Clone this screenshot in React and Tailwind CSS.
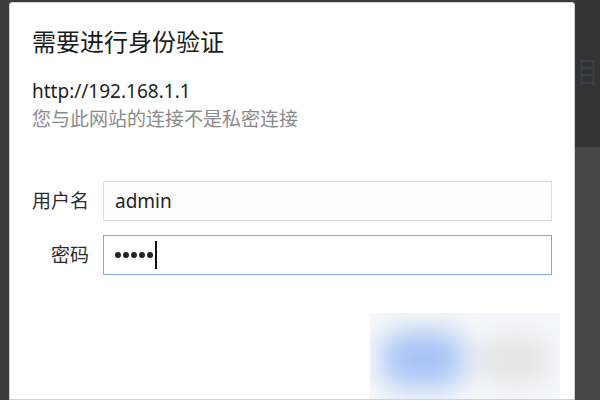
export default function App() {
  const font = "font-['Noto_Sans','Noto_Sans_CJK_SC',sans-serif]";

  return (
    <div className={`w-[600px] h-[400px] flex overflow-hidden bg-[#3c3c3c] ${font}`}>
      {/* left backdrop */}
      <div className="w-[9px] shrink-0 bg-[#3d3d3d]" />

      {/* dialog */}
      <div className="w-[566px] shrink-0 mt-[2px] bg-white border border-[#d2d2d2] rounded-t-[3px] flex flex-col overflow-hidden">
        <div className="pl-[22px] pt-[23px]">
          <h1 className="text-[24px] leading-[32px] text-[#1b1b1b]">需要进行身份验证</h1>
          <div className="mt-[19px] text-[19px] leading-[28px] text-[#1f1f1f]">http://192.168.1.1</div>
          <div className="text-[19px] leading-[28px] text-[#8a8a8a]">您与此网站的连接不是私密连接</div>
        </div>

        <div className="mt-[48px] pl-[22px] pr-[22px] flex flex-col gap-[14px]">
          <div className="flex items-center gap-[14px]">
            <span className="w-[57px] text-right text-[19px] text-[#2b2b2b]">用户名</span>
            <div className="flex-1 h-[40px] flex items-center pl-[11px] border border-[#dcdcdc] bg-[#fdfdfd] text-[19px] text-[#222]">
              admin
            </div>
          </div>
          <div className="flex items-center gap-[14px]">
            <span className="w-[57px] text-right text-[19px] text-[#2b2b2b]">密码</span>
            <div className="flex-1 h-[40px] flex items-center pl-[11px] border border-[#7ea6e6] bg-white">
              <span className="flex gap-[2.5px]">
                {[0, 1, 2, 3, 4].map((i) => (
                  <span key={i} className="w-[5.5px] h-[5.5px] rounded-full bg-[#222]" />
                ))}
              </span>
              <span className="ml-[2px] w-[2px] h-[28px] bg-[#111]" />
            </div>
          </div>
        </div>

        {/* blurred buttons */}
        <div className="mt-[38px] self-end mr-[14px] w-[190px] h-[90px] relative overflow-hidden bg-[#f7f8fb]">
          <div className="absolute inset-0 blur-[14px]">
            <div className="absolute left-[12px] top-[18px] w-[82px] h-[56px] rounded-[20px] bg-[#a6c3f4]" />
            <div className="absolute left-[108px] top-[22px] w-[72px] h-[50px] rounded-[20px] bg-[#e4e4e4]" />
          </div>
        </div>
      </div>

      {/* right backdrop */}
      <div className="flex-1 flex flex-col">
        <div className="h-[147px] bg-[#333333] flex justify-center pt-[62px]">
          <span className="h-fit text-[20px] leading-none scale-y-150 text-[#38414e]">目</span>
        </div>
        <div className="flex-1 bg-[#474747]" />
      </div>
    </div>
  );
}
